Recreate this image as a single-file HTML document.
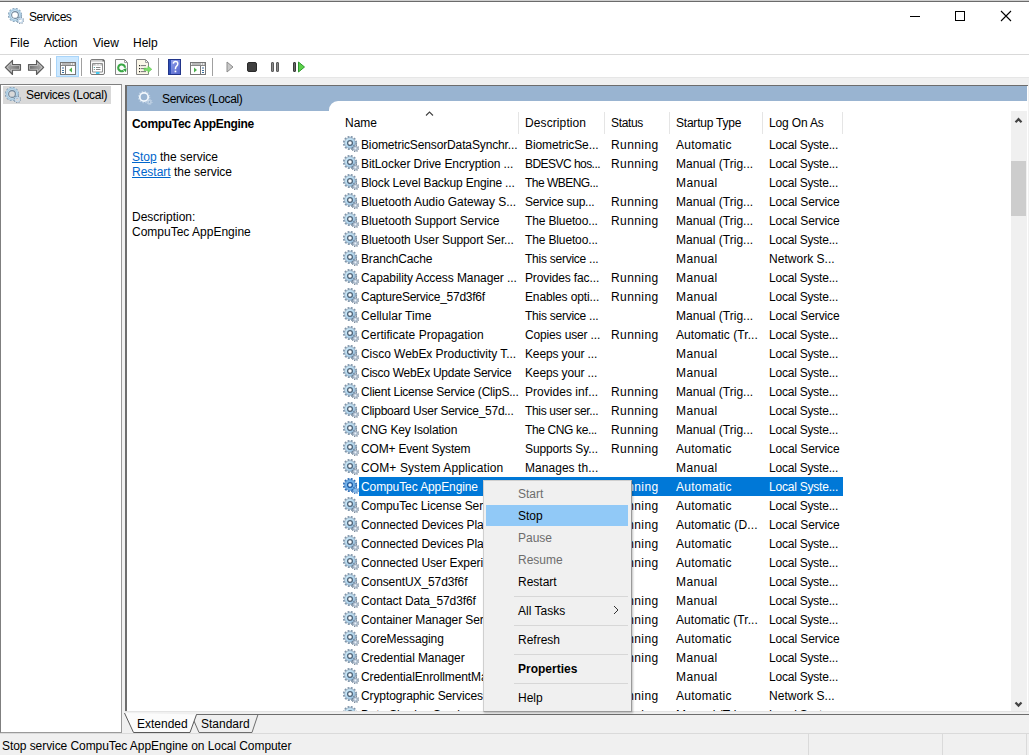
<!DOCTYPE html>
<html><head><meta charset="utf-8">
<style>
*{margin:0;padding:0;box-sizing:border-box}
html,body{width:1029px;height:755px;overflow:hidden;background:#f0f0f0;font-family:"Liberation Sans",sans-serif;font-size:12px;color:#000}
.a{position:absolute;white-space:nowrap}
.t{position:absolute;white-space:nowrap;line-height:14px;height:14px}
</style></head><body>
<svg width="0" height="0" style="position:absolute">
<defs>
<linearGradient id="gr" x1="0" y1="0" x2="1" y2="1">
<stop offset="0" stop-color="#d6f0fb"/><stop offset=".55" stop-color="#b2d6ee"/><stop offset="1" stop-color="#86aed0"/>
</linearGradient>
<symbol id="gear" viewBox="0 0 16 16">
<circle cx="7" cy="7" r="6.2" fill="none" stroke="#7f95aa" stroke-width="1.8" stroke-dasharray="1.9 1.35"/>
<circle cx="7" cy="7" r="5.4" fill="url(#gr)" stroke="#8499ad" stroke-width="0.6"/>
<circle cx="7" cy="7" r="2.4" fill="#fbfdff" stroke="#51667a" stroke-width="1.3"/>
<circle cx="12.4" cy="12.4" r="3" fill="none" stroke="#6d8095" stroke-width="1.5" stroke-dasharray="1.1 1.25"/>
<circle cx="12.4" cy="12.4" r="2.2" fill="#bccbdc" stroke="#7a8ca0" stroke-width="0.5"/>
<circle cx="12.4" cy="12.4" r="0.8" fill="#eef3f8"/>
</symbol>
<symbol id="gearL" viewBox="0 0 16 16">
<circle cx="7" cy="7" r="6.2" fill="none" stroke="#8197ac" stroke-width="1.8" stroke-dasharray="1.9 1.35"/>
<circle cx="7" cy="7" r="5.3" fill="none" stroke="#b9dcf2" stroke-width="2.2"/>
<circle cx="7" cy="7" r="5.4" fill="none" stroke="#93a9bd" stroke-width="0.5"/>
<circle cx="7" cy="7" r="3.4" fill="none" stroke="#6f879d" stroke-width="1.1"/>
<circle cx="12.4" cy="12.4" r="3" fill="none" stroke="#7a8fa4" stroke-width="1.5" stroke-dasharray="1.1 1.25"/>
<circle cx="12.4" cy="12.4" r="2.1" fill="none" stroke="#c4d8ea" stroke-width="1.2"/>
</symbol>
<symbol id="gearS" viewBox="0 0 16 16">
<circle cx="7" cy="7" r="6.2" fill="none" stroke="#2f6db5" stroke-width="1.8" stroke-dasharray="1.9 1.35"/>
<circle cx="7" cy="7" r="5.4" fill="#6eb0ea" stroke="#3a78c0" stroke-width="0.6"/>
<circle cx="7" cy="7" r="2.4" fill="#e6f3ff" stroke="#1f5aa0" stroke-width="1.3"/>
<circle cx="12.4" cy="12.4" r="3" fill="none" stroke="#2f6db5" stroke-width="1.5" stroke-dasharray="1.1 1.25"/>
<circle cx="12.4" cy="12.4" r="2.2" fill="#86bdec" stroke="#3a78c0" stroke-width="0.5"/>
</symbol>
<symbol id="gearW" viewBox="0 0 16 16">
<circle cx="6" cy="7" r="5.6" fill="none" stroke="#bfd1e4" stroke-width="1.4" stroke-dasharray="1.4 1.53"/>
<circle cx="6" cy="7" r="4.2" fill="none" stroke="#f2f7fc" stroke-width="1.8"/>
<circle cx="11.5" cy="12" r="2.6" fill="none" stroke="#cddbea" stroke-width="1" stroke-dasharray="0.9 1.1"/>
<circle cx="11.5" cy="12" r="1.6" fill="none" stroke="#dfe9f4" stroke-width="0.7"/>
</symbol>
</defs></svg>

<div class="a" style="left:0;top:0;width:1029px;height:1px;background:#cfcfcf"></div>
<div class="a" style="left:0;top:1px;width:1029px;height:1px;background:#6b6b6b"></div>
<div class="a" style="left:0;top:2px;width:1029px;height:52px;background:#fff"></div>
<div class="a" style="left:8px;top:8px;width:16px;height:16px"><svg width="16" height="16"><use href="#gearL"/></svg></div>
<div class="t" style="left:29px;top:10px;letter-spacing:-0.45px">Services</div>
<div class="a" style="left:910px;top:16px;width:10px;height:1px;background:#000"></div>
<div class="a" style="left:955px;top:11px;width:10px;height:10px;border:1px solid #000"></div>
<svg class="a" style="left:1000px;top:10px" width="12" height="12"><path d="M1 1L11 11M11 1L1 11" stroke="#000" stroke-width="1.1"/></svg>

<div class="t" style="left:10px;top:36px">File</div>
<div class="t" style="left:44px;top:36px">Action</div>
<div class="t" style="left:93px;top:36px">View</div>
<div class="t" style="left:133px;top:36px">Help</div>
<div class="a" style="left:0;top:54px;width:1029px;height:1px;background:#d9d9d9"></div>
<div class="a" style="left:0;top:55px;width:1029px;height:22px;background:#fff"></div>
<div class="a" style="left:0;top:77px;width:1029px;height:1px;background:#e6e6e6"></div>
<!-- back/forward -->
<svg class="a" style="left:4px;top:59px" width="18" height="17" viewBox="0 0 18 17">
<defs><linearGradient id="ag" x1="0" y1="0" x2="1" y2="0.3"><stop offset="0" stop-color="#bdbdbd"/><stop offset="1" stop-color="#6f6f6f"/></linearGradient>
<linearGradient id="ag2" x1="1" y1="0" x2="0" y2="0.3"><stop offset="0" stop-color="#bdbdbd"/><stop offset="1" stop-color="#6f6f6f"/></linearGradient></defs>
<path d="M1.3 8.3L8.5 1.3V5.5H16.5V11.3H8.5V15.5Z" fill="url(#ag)" stroke="#5c5c5c" stroke-width="1.1" stroke-linejoin="round"/>
<path d="M3 8.3L7.5 4V6.5H15.5V10.3H7.5V12.7Z" fill="none" stroke="#d6d6d6" stroke-width="0.6"/>
</svg>
<svg class="a" style="left:27px;top:59px" width="18" height="17" viewBox="0 0 18 17">
<path d="M16.7 8.3L9.5 1.3V5.5H1.5V11.3H9.5V15.5Z" fill="url(#ag2)" stroke="#5c5c5c" stroke-width="1.1" stroke-linejoin="round"/>
<path d="M15 8.3L10.5 4V6.5H2.5V10.3H10.5V12.7Z" fill="none" stroke="#d6d6d6" stroke-width="0.6"/>
</svg>
<div class="a" style="left:50px;top:58px;width:1px;height:18px;background:#a0a0a0"></div>
<div class="a" style="left:56px;top:56px;width:23px;height:21px;background:#cce8ff;border:1px solid #a9d5fa"></div>
<svg class="a" style="left:60px;top:62px" width="16" height="13" viewBox="0 0 16 13">
<rect x="0.5" y="0.5" width="15" height="12" fill="#fff" stroke="#777"/>
<rect x="1" y="1" width="14" height="3" fill="#e8e8e8"/>
<rect x="2" y="1.5" width="9" height="1" fill="#888"/>
<rect x="12" y="1.5" width="1" height="1" fill="#888"/><rect x="14" y="1.5" width="1" height="1" fill="#888"/>
<rect x="1" y="3" width="14" height="1" fill="#888"/>
<line x1="5.5" y1="4" x2="5.5" y2="12" stroke="#777"/>
<rect x="2" y="5.5" width="2" height="1" fill="#3f6f9f"/><rect x="2" y="8" width="2" height="1" fill="#3f6f9f"/><rect x="2" y="10" width="2" height="1" fill="#3f6f9f"/>
<path d="M12 5.5V10.5L9 8Z" fill="#4cb04c"/>
</svg>
<div class="a" style="left:81px;top:58px;width:1px;height:18px;background:#a0a0a0"></div>
<svg class="a" style="left:90px;top:59px" width="15" height="16" viewBox="0 0 15 16">
<rect x="0.5" y="0.5" width="14" height="15" rx="1.5" fill="#fafafa" stroke="#7a7a7a"/>
<rect x="1" y="1.3" width="12" height="1.2" fill="#b8b8b8"/>
<rect x="12.5" y="1" width="1.5" height="1.5" fill="#666"/>
<path d="M2.5 4.5H12.5V13H2.5Z" fill="#fff" stroke="#909090"/>
<rect x="3" y="5" width="9" height="1.6" fill="#bdbdbd"/>
<rect x="5.5" y="5.2" width="2" height="1.2" fill="#fff"/><rect x="8.5" y="5.2" width="2" height="1.2" fill="#fff"/>
<rect x="3.8" y="8" width="1" height="1" fill="#2a8f8f"/><rect x="6" y="8" width="4.5" height="1" fill="#8a8a8a"/>
<rect x="3.8" y="10" width="1" height="1" fill="#777"/><rect x="6" y="10" width="4.5" height="1" fill="#8a8a8a"/>
<rect x="6" y="13" width="3.5" height="2" fill="#44c8ee"/>
</svg>
<svg class="a" style="left:115px;top:59px" width="14" height="16" viewBox="0 0 14 16">
<path d="M0.5 0.5H9.5L12.5 3.5V15.5H0.5Z" fill="#fcfcfc" stroke="#858585"/>
<path d="M9.5 0.5V3.5H12.5" fill="none" stroke="#a0a0a0"/>
<path d="M8.6 11.6A3.4 3.4 0 1 1 10 8.8" fill="none" stroke="#3aa845" stroke-width="2.1"/>
<path d="M8 10.2L11.6 9.3L11 13.3Z" fill="#2e9e3c"/>
</svg>
<svg class="a" style="left:136px;top:59px" width="17" height="16" viewBox="0 0 17 16">
<path d="M0.5 0.5H9.5L12.5 3.5V15.5H0.5Z" fill="#fbf7e8" stroke="#858585"/>
<path d="M9.5 0.5V3.5H12.5" fill="none" stroke="#a0a0a0"/>
<rect x="3" y="6" width="1.2" height="1.2" fill="#222"/><rect x="5" y="6.1" width="5" height="1" fill="#777"/>
<rect x="3" y="9" width="1.2" height="1.2" fill="#222"/><rect x="5" y="9.1" width="5" height="1" fill="#777"/>
<rect x="3" y="12" width="1.2" height="1.2" fill="#222"/><rect x="5" y="12.1" width="5" height="1" fill="#777"/>
<path d="M8 9.2H12V7L15.8 10.3L12 13.6V11.4H8Z" fill="#7ee06a" stroke="#4dbb40" stroke-width="0.5"/>
</svg>
<div class="a" style="left:158px;top:58px;width:1px;height:18px;background:#a0a0a0"></div>
<svg class="a" style="left:168px;top:59px" width="13" height="16" viewBox="0 0 13 16">
<defs><linearGradient id="hg" x1="0" y1="0" x2="1" y2="1"><stop offset="0" stop-color="#9aa8f0"/><stop offset="1" stop-color="#4d5fc8"/></linearGradient></defs>
<rect x="0" y="0" width="13" height="16" fill="url(#hg)"/>
<rect x="0" y="0" width="3" height="16" fill="#2d4fb8"/>
<rect x="0.5" y="0.5" width="12" height="15" fill="none" stroke="#22358a" stroke-width="1"/>
<path d="M5.3 4.6Q5.6 2.6 7.6 2.6Q9.8 2.6 9.8 4.8Q9.8 6.3 8.4 7.3Q7.4 8 7.4 10.3" fill="none" stroke="#fff" stroke-width="1.5"/>
<rect x="6.6" y="11.6" width="1.7" height="1.7" fill="#fff"/>
</svg>
<svg class="a" style="left:190px;top:62px" width="16" height="13" viewBox="0 0 16 13">
<rect x="0.5" y="0.5" width="15" height="12" fill="#fff" stroke="#777"/>
<rect x="1" y="1" width="14" height="3" fill="#e8e8e8"/>
<rect x="2" y="1.5" width="9" height="1" fill="#888"/>
<rect x="12" y="1.5" width="1" height="1" fill="#888"/><rect x="14" y="1.5" width="1" height="1" fill="#888"/>
<rect x="1" y="3" width="14" height="1" fill="#888"/>
<line x1="10.5" y1="4" x2="10.5" y2="12" stroke="#777"/>
<rect x="12" y="5.5" width="2" height="1" fill="#3f6f9f"/><rect x="12" y="8" width="2" height="1" fill="#3f6f9f"/><rect x="12" y="10" width="2" height="1" fill="#3f6f9f"/>
<path d="M4 5.5V10.5L7 8Z" fill="#4cb04c"/>
</svg>
<div class="a" style="left:212px;top:58px;width:1px;height:18px;background:#a0a0a0"></div>
<svg class="a" style="left:226px;top:61px" width="8" height="12" viewBox="0 0 8 12">
<path d="M1 1L7 6L1 11Z" fill="#c8c8c8" stroke="#8c8c8c" stroke-width="1" stroke-linejoin="round"/>
</svg>
<div class="a" style="left:247px;top:62px;width:10px;height:10px;background:#3f3f3f;border:1px solid #2a2a2a;border-radius:2px"></div>
<div class="a" style="left:271px;top:62px;width:3px;height:10px;background:#8a8a8a;border:1px solid #5a5a5a;border-radius:1px"></div>
<div class="a" style="left:276px;top:62px;width:3px;height:10px;background:#8a8a8a;border:1px solid #5a5a5a;border-radius:1px"></div>
<div class="a" style="left:293px;top:62px;width:3px;height:10px;background:#666;border:1px solid #3a3a3a;border-radius:1px"></div>
<svg class="a" style="left:298px;top:61px" width="8" height="12" viewBox="0 0 8 12">
<path d="M0.5 1L6.5 6L0.5 11Z" fill="#5cd24a" stroke="#2f9a2f" stroke-width="1" stroke-linejoin="round"/>
</svg>


<div class="a" style="left:0;top:84px;width:122px;height:649px;background:#fff;border:1px solid #7f7f7f;border-right-color:#9a9a9a;border-bottom-color:#9a9a9a"></div>
<div class="a" style="left:3px;top:86px;width:108px;height:18px;background:#d9d9d9"></div>
<div class="a" style="left:5px;top:87px;width:16px;height:16px"><svg width="16" height="16"><use href="#gearL"/></svg></div>
<div class="t" style="left:26px;top:88px;letter-spacing:-0.3px">Services (Local)</div>
<div class="a" style="left:125px;top:85px;width:903px;height:627px;background:#fff;border-left:2px solid #6d6d6d;border-top:1px solid #6d6d6d"></div>
<div class="a" style="left:127px;top:86px;width:900px;height:25px;background:#99b4d1"></div>
<div class="a" style="left:329px;top:101px;width:698px;height:12px;background:#fff;border-top-left-radius:9px"></div>
<div class="a" style="left:138px;top:90px;width:16px;height:16px"><svg width="16" height="16"><use href="#gearW"/></svg></div>
<div class="t" style="left:162px;top:92px;letter-spacing:-0.35px">Services (Local)</div>
<div class="t" style="left:132px;top:117px;font-weight:bold;letter-spacing:-0.3px">CompuTec AppEngine</div>
<div class="t" style="left:132px;top:150px"><span style="color:#0066cc;text-decoration:underline">Stop</span> the service</div>
<div class="t" style="left:132px;top:165px"><span style="color:#0066cc;text-decoration:underline">Restart</span> the service</div>
<div class="t" style="left:132px;top:210px">Description:</div>
<div class="t" style="left:132px;top:225px">CompuTec AppEngine</div>

<div class="t" style="left:345px;top:116px">Name</div>
<svg class="a" style="left:425px;top:110px" width="10" height="7"><path d="M1 5.5L4.5 2L8 5.5" fill="none" stroke="#404040" stroke-width="1.1"/></svg>
<div class="a" style="left:518px;top:112px;width:1px;height:22px;background:#e5e5e5"></div>
<div class="a" style="left:604px;top:112px;width:1px;height:22px;background:#e5e5e5"></div>
<div class="a" style="left:669px;top:112px;width:1px;height:22px;background:#e5e5e5"></div>
<div class="a" style="left:762px;top:112px;width:1px;height:22px;background:#e5e5e5"></div>
<div class="a" style="left:842px;top:112px;width:1px;height:22px;background:#e5e5e5"></div>
<div class="t" style="left:525px;top:116px;letter-spacing:0.1px">Description</div>
<div class="t" style="left:611px;top:116px;letter-spacing:-0.35px">Status</div>
<div class="t" style="left:676px;top:116px;letter-spacing:-0.22px">Startup Type</div>
<div class="t" style="left:769px;top:116px;letter-spacing:-0.15px">Log On As</div>
<div class="a" style="left:329px;top:135px;width:682px;height:577px;overflow:hidden">
<div class="a" style="left:14px;top:1px;width:16px;height:16px"><svg width="16" height="16"><use href="#gear"/></svg></div>
<div class="t" style="left:32px;top:3px;letter-spacing:-0.13px;">BiometricSensorDataSynchr...</div>
<div class="t" style="left:196px;top:3px;letter-spacing:-0.092px;">BiometricSe...</div>
<div class="t" style="left:282px;top:3px;letter-spacing:0.417px;">Running</div>
<div class="t" style="left:347px;top:3px;letter-spacing:0.275px;">Automatic</div>
<div class="t" style="left:440px;top:3px;letter-spacing:-0.215px;">Local Syste...</div>
<div class="a" style="left:14px;top:20px;width:16px;height:16px"><svg width="16" height="16"><use href="#gear"/></svg></div>
<div class="t" style="left:32px;top:22px;letter-spacing:-0.079px;">BitLocker Drive Encryption ...</div>
<div class="t" style="left:196px;top:22px;letter-spacing:-0.542px;">BDESVC hos...</div>
<div class="t" style="left:282px;top:22px;letter-spacing:0.417px;">Running</div>
<div class="t" style="left:347px;top:22px;letter-spacing:0.014px;">Manual (Trig...</div>
<div class="t" style="left:440px;top:22px;letter-spacing:-0.215px;">Local Syste...</div>
<div class="a" style="left:14px;top:39px;width:16px;height:16px"><svg width="16" height="16"><use href="#gear"/></svg></div>
<div class="t" style="left:32px;top:41px;letter-spacing:-0.179px;">Block Level Backup Engine ...</div>
<div class="t" style="left:196px;top:41px;letter-spacing:-0.527px;">The WBENG...</div>
<div class="t" style="left:347px;top:41px;letter-spacing:0.38px;">Manual</div>
<div class="t" style="left:440px;top:41px;letter-spacing:-0.215px;">Local Syste...</div>
<div class="a" style="left:14px;top:58px;width:16px;height:16px"><svg width="16" height="16"><use href="#gear"/></svg></div>
<div class="t" style="left:32px;top:60px;letter-spacing:-0.037px;">Bluetooth Audio Gateway S...</div>
<div class="t" style="left:196px;top:60px;letter-spacing:-0.238px;">Service sup...</div>
<div class="t" style="left:282px;top:60px;letter-spacing:0.417px;">Running</div>
<div class="t" style="left:347px;top:60px;letter-spacing:0.014px;">Manual (Trig...</div>
<div class="t" style="left:440px;top:60px;letter-spacing:-0.117px;">Local Service</div>
<div class="a" style="left:14px;top:77px;width:16px;height:16px"><svg width="16" height="16"><use href="#gear"/></svg></div>
<div class="t" style="left:32px;top:79px;letter-spacing:-0.042px;">Bluetooth Support Service</div>
<div class="t" style="left:196px;top:79px;letter-spacing:-0.138px;">The Bluetoo...</div>
<div class="t" style="left:282px;top:79px;letter-spacing:0.417px;">Running</div>
<div class="t" style="left:347px;top:79px;letter-spacing:0.014px;">Manual (Trig...</div>
<div class="t" style="left:440px;top:79px;letter-spacing:-0.117px;">Local Service</div>
<div class="a" style="left:14px;top:96px;width:16px;height:16px"><svg width="16" height="16"><use href="#gear"/></svg></div>
<div class="t" style="left:32px;top:98px;letter-spacing:-0.114px;">Bluetooth User Support Ser...</div>
<div class="t" style="left:196px;top:98px;letter-spacing:-0.138px;">The Bluetoo...</div>
<div class="t" style="left:347px;top:98px;letter-spacing:0.014px;">Manual (Trig...</div>
<div class="t" style="left:440px;top:98px;letter-spacing:-0.215px;">Local Syste...</div>
<div class="a" style="left:14px;top:115px;width:16px;height:16px"><svg width="16" height="16"><use href="#gear"/></svg></div>
<div class="t" style="left:32px;top:117px;letter-spacing:-0.13px;">BranchCache</div>
<div class="t" style="left:196px;top:117px;letter-spacing:-0.253px;">This service ...</div>
<div class="t" style="left:347px;top:117px;letter-spacing:0.38px;">Manual</div>
<div class="t" style="left:440px;top:117px;letter-spacing:0.027px;">Network S...</div>
<div class="a" style="left:14px;top:134px;width:16px;height:16px"><svg width="16" height="16"><use href="#gear"/></svg></div>
<div class="t" style="left:32px;top:136px;letter-spacing:-0.079px;">Capability Access Manager ...</div>
<div class="t" style="left:196px;top:136px;letter-spacing:-0.129px;">Provides fac...</div>
<div class="t" style="left:282px;top:136px;letter-spacing:0.417px;">Running</div>
<div class="t" style="left:347px;top:136px;letter-spacing:0.38px;">Manual</div>
<div class="t" style="left:440px;top:136px;letter-spacing:-0.215px;">Local Syste...</div>
<div class="a" style="left:14px;top:153px;width:16px;height:16px"><svg width="16" height="16"><use href="#gear"/></svg></div>
<div class="t" style="left:32px;top:155px;letter-spacing:-0.252px;">CaptureService_57d3f6f</div>
<div class="t" style="left:196px;top:155px;letter-spacing:-0.129px;">Enables opti...</div>
<div class="t" style="left:282px;top:155px;letter-spacing:0.417px;">Running</div>
<div class="t" style="left:347px;top:155px;letter-spacing:0.38px;">Manual</div>
<div class="t" style="left:440px;top:155px;letter-spacing:-0.215px;">Local Syste...</div>
<div class="a" style="left:14px;top:172px;width:16px;height:16px"><svg width="16" height="16"><use href="#gear"/></svg></div>
<div class="t" style="left:32px;top:174px;letter-spacing:0.033px;">Cellular Time</div>
<div class="t" style="left:196px;top:174px;letter-spacing:-0.253px;">This service ...</div>
<div class="t" style="left:347px;top:174px;letter-spacing:0.014px;">Manual (Trig...</div>
<div class="t" style="left:440px;top:174px;letter-spacing:-0.117px;">Local Service</div>
<div class="a" style="left:14px;top:191px;width:16px;height:16px"><svg width="16" height="16"><use href="#gear"/></svg></div>
<div class="t" style="left:32px;top:193px;letter-spacing:0.027px;">Certificate Propagation</div>
<div class="t" style="left:196px;top:193px;letter-spacing:-0.15px;">Copies user ...</div>
<div class="t" style="left:282px;top:193px;letter-spacing:0.417px;">Running</div>
<div class="t" style="left:347px;top:193px;letter-spacing:0.06px;">Automatic (Tr...</div>
<div class="t" style="left:440px;top:193px;letter-spacing:-0.215px;">Local Syste...</div>
<div class="a" style="left:14px;top:210px;width:16px;height:16px"><svg width="16" height="16"><use href="#gear"/></svg></div>
<div class="t" style="left:32px;top:212px;letter-spacing:-0.043px;">Cisco WebEx Productivity T...</div>
<div class="t" style="left:196px;top:212px;letter-spacing:-0.131px;">Keeps your ...</div>
<div class="t" style="left:347px;top:212px;letter-spacing:0.38px;">Manual</div>
<div class="t" style="left:440px;top:212px;letter-spacing:-0.215px;">Local Syste...</div>
<div class="a" style="left:14px;top:229px;width:16px;height:16px"><svg width="16" height="16"><use href="#gear"/></svg></div>
<div class="t" style="left:32px;top:231px;letter-spacing:-0.264px;">Cisco WebEx Update Service</div>
<div class="t" style="left:196px;top:231px;letter-spacing:-0.131px;">Keeps your ...</div>
<div class="t" style="left:347px;top:231px;letter-spacing:0.38px;">Manual</div>
<div class="t" style="left:440px;top:231px;letter-spacing:-0.215px;">Local Syste...</div>
<div class="a" style="left:14px;top:248px;width:16px;height:16px"><svg width="16" height="16"><use href="#gear"/></svg></div>
<div class="t" style="left:32px;top:250px;letter-spacing:-0.226px;">Client License Service (ClipS...</div>
<div class="t" style="left:196px;top:250px;letter-spacing:0.036px;">Provides inf...</div>
<div class="t" style="left:282px;top:250px;letter-spacing:0.417px;">Running</div>
<div class="t" style="left:347px;top:250px;letter-spacing:0.014px;">Manual (Trig...</div>
<div class="t" style="left:440px;top:250px;letter-spacing:-0.215px;">Local Syste...</div>
<div class="a" style="left:14px;top:267px;width:16px;height:16px"><svg width="16" height="16"><use href="#gear"/></svg></div>
<div class="t" style="left:32px;top:269px;letter-spacing:-0.261px;">Clipboard User Service_57d...</div>
<div class="t" style="left:196px;top:269px;letter-spacing:-0.34px;">This user ser...</div>
<div class="t" style="left:282px;top:269px;letter-spacing:0.417px;">Running</div>
<div class="t" style="left:347px;top:269px;letter-spacing:0.38px;">Manual</div>
<div class="t" style="left:440px;top:269px;letter-spacing:-0.215px;">Local Syste...</div>
<div class="a" style="left:14px;top:286px;width:16px;height:16px"><svg width="16" height="16"><use href="#gear"/></svg></div>
<div class="t" style="left:32px;top:288px;letter-spacing:-0.15px;">CNG Key Isolation</div>
<div class="t" style="left:196px;top:288px;letter-spacing:-0.375px;">The CNG ke...</div>
<div class="t" style="left:282px;top:288px;letter-spacing:0.417px;">Running</div>
<div class="t" style="left:347px;top:288px;letter-spacing:0.014px;">Manual (Trig...</div>
<div class="t" style="left:440px;top:288px;letter-spacing:-0.215px;">Local Syste...</div>
<div class="a" style="left:14px;top:305px;width:16px;height:16px"><svg width="16" height="16"><use href="#gear"/></svg></div>
<div class="t" style="left:32px;top:307px;letter-spacing:-0.175px;">COM+ Event System</div>
<div class="t" style="left:196px;top:307px;letter-spacing:-0.115px;">Supports Sy...</div>
<div class="t" style="left:282px;top:307px;letter-spacing:0.417px;">Running</div>
<div class="t" style="left:347px;top:307px;letter-spacing:0.275px;">Automatic</div>
<div class="t" style="left:440px;top:307px;letter-spacing:-0.117px;">Local Service</div>
<div class="a" style="left:14px;top:324px;width:16px;height:16px"><svg width="16" height="16"><use href="#gear"/></svg></div>
<div class="t" style="left:32px;top:326px;letter-spacing:0.109px;">COM+ System Application</div>
<div class="t" style="left:196px;top:326px;letter-spacing:0.042px;">Manages th...</div>
<div class="t" style="left:347px;top:326px;letter-spacing:0.38px;">Manual</div>
<div class="t" style="left:440px;top:326px;letter-spacing:-0.215px;">Local Syste...</div>
<div class="a" style="left:30px;top:342px;width:484px;height:19px;background:#0078d7"></div>
<div class="a" style="left:14px;top:343px;width:16px;height:16px"><svg width="16" height="16"><use href="#gearS"/></svg></div>
<div class="t" style="left:32px;top:345px;color:#fff;letter-spacing:-0.1px;">CompuTec AppEngine</div>
<div class="t" style="left:196px;top:345px;color:#fff;letter-spacing:-0.1px;">CompuTec...</div>
<div class="t" style="left:282px;top:345px;color:#fff;letter-spacing:0.417px;">Running</div>
<div class="t" style="left:347px;top:345px;color:#fff;letter-spacing:0.275px;">Automatic</div>
<div class="t" style="left:440px;top:345px;color:#fff;letter-spacing:-0.215px;">Local Syste...</div>
<div class="a" style="left:14px;top:362px;width:16px;height:16px"><svg width="16" height="16"><use href="#gear"/></svg></div>
<div class="t" style="left:32px;top:364px;letter-spacing:-0.1px;">CompuTec License Service</div>
<div class="t" style="left:196px;top:364px;letter-spacing:-0.1px;">CompuTec...</div>
<div class="t" style="left:282px;top:364px;letter-spacing:0.417px;">Running</div>
<div class="t" style="left:347px;top:364px;letter-spacing:0.275px;">Automatic</div>
<div class="t" style="left:440px;top:364px;letter-spacing:-0.215px;">Local Syste...</div>
<div class="a" style="left:14px;top:381px;width:16px;height:16px"><svg width="16" height="16"><use href="#gear"/></svg></div>
<div class="t" style="left:32px;top:383px;letter-spacing:-0.1px;">Connected Devices Platfor...</div>
<div class="t" style="left:196px;top:383px;letter-spacing:-0.34px;">This user ser...</div>
<div class="t" style="left:282px;top:383px;letter-spacing:0.417px;">Running</div>
<div class="t" style="left:347px;top:383px;letter-spacing:0.157px;">Automatic (D...</div>
<div class="t" style="left:440px;top:383px;letter-spacing:-0.117px;">Local Service</div>
<div class="a" style="left:14px;top:400px;width:16px;height:16px"><svg width="16" height="16"><use href="#gear"/></svg></div>
<div class="t" style="left:32px;top:402px;letter-spacing:-0.1px;">Connected Devices Platfor...</div>
<div class="t" style="left:196px;top:402px;letter-spacing:-0.253px;">This service ...</div>
<div class="t" style="left:282px;top:402px;letter-spacing:0.417px;">Running</div>
<div class="t" style="left:347px;top:402px;letter-spacing:0.275px;">Automatic</div>
<div class="t" style="left:440px;top:402px;letter-spacing:-0.215px;">Local Syste...</div>
<div class="a" style="left:14px;top:419px;width:16px;height:16px"><svg width="16" height="16"><use href="#gear"/></svg></div>
<div class="t" style="left:32px;top:421px;letter-spacing:-0.1px;">Connected User Experienc...</div>
<div class="t" style="left:196px;top:421px;letter-spacing:-0.1px;">The Connect...</div>
<div class="t" style="left:282px;top:421px;letter-spacing:0.417px;">Running</div>
<div class="t" style="left:347px;top:421px;letter-spacing:0.275px;">Automatic</div>
<div class="t" style="left:440px;top:421px;letter-spacing:-0.215px;">Local Syste...</div>
<div class="a" style="left:14px;top:438px;width:16px;height:16px"><svg width="16" height="16"><use href="#gear"/></svg></div>
<div class="t" style="left:32px;top:440px;letter-spacing:-0.1px;">ConsentUX_57d3f6f</div>
<div class="t" style="left:196px;top:440px;letter-spacing:-0.1px;">Allows Con...</div>
<div class="t" style="left:347px;top:440px;letter-spacing:0.38px;">Manual</div>
<div class="t" style="left:440px;top:440px;letter-spacing:-0.215px;">Local Syste...</div>
<div class="a" style="left:14px;top:457px;width:16px;height:16px"><svg width="16" height="16"><use href="#gear"/></svg></div>
<div class="t" style="left:32px;top:459px;letter-spacing:-0.1px;">Contact Data_57d3f6f</div>
<div class="t" style="left:196px;top:459px;letter-spacing:-0.1px;">Indexes con...</div>
<div class="t" style="left:282px;top:459px;letter-spacing:0.417px;">Running</div>
<div class="t" style="left:347px;top:459px;letter-spacing:0.38px;">Manual</div>
<div class="t" style="left:440px;top:459px;letter-spacing:-0.215px;">Local Syste...</div>
<div class="a" style="left:14px;top:476px;width:16px;height:16px"><svg width="16" height="16"><use href="#gear"/></svg></div>
<div class="t" style="left:32px;top:478px;letter-spacing:-0.1px;">Container Manager Service</div>
<div class="t" style="left:196px;top:478px;letter-spacing:-0.1px;">Provides ad...</div>
<div class="t" style="left:282px;top:478px;letter-spacing:0.417px;">Running</div>
<div class="t" style="left:347px;top:478px;letter-spacing:0.06px;">Automatic (Tr...</div>
<div class="t" style="left:440px;top:478px;letter-spacing:-0.215px;">Local Syste...</div>
<div class="a" style="left:14px;top:495px;width:16px;height:16px"><svg width="16" height="16"><use href="#gear"/></svg></div>
<div class="t" style="left:32px;top:497px;letter-spacing:-0.1px;">CoreMessaging</div>
<div class="t" style="left:196px;top:497px;letter-spacing:-0.1px;">Manages co...</div>
<div class="t" style="left:282px;top:497px;letter-spacing:0.417px;">Running</div>
<div class="t" style="left:347px;top:497px;letter-spacing:0.275px;">Automatic</div>
<div class="t" style="left:440px;top:497px;letter-spacing:-0.117px;">Local Service</div>
<div class="a" style="left:14px;top:514px;width:16px;height:16px"><svg width="16" height="16"><use href="#gear"/></svg></div>
<div class="t" style="left:32px;top:516px;letter-spacing:-0.1px;">Credential Manager</div>
<div class="t" style="left:196px;top:516px;letter-spacing:-0.1px;">Provides se...</div>
<div class="t" style="left:282px;top:516px;letter-spacing:0.417px;">Running</div>
<div class="t" style="left:347px;top:516px;letter-spacing:0.38px;">Manual</div>
<div class="t" style="left:440px;top:516px;letter-spacing:-0.215px;">Local Syste...</div>
<div class="a" style="left:14px;top:533px;width:16px;height:16px"><svg width="16" height="16"><use href="#gear"/></svg></div>
<div class="t" style="left:32px;top:535px;letter-spacing:-0.1px;">CredentialEnrollmentMana...</div>
<div class="t" style="left:196px;top:535px;letter-spacing:-0.1px;">Credential E...</div>
<div class="t" style="left:347px;top:535px;letter-spacing:0.38px;">Manual</div>
<div class="t" style="left:440px;top:535px;letter-spacing:-0.215px;">Local Syste...</div>
<div class="a" style="left:14px;top:552px;width:16px;height:16px"><svg width="16" height="16"><use href="#gear"/></svg></div>
<div class="t" style="left:32px;top:554px;letter-spacing:-0.1px;">Cryptographic Services</div>
<div class="t" style="left:196px;top:554px;letter-spacing:-0.1px;">Provides thr...</div>
<div class="t" style="left:282px;top:554px;letter-spacing:0.417px;">Running</div>
<div class="t" style="left:347px;top:554px;letter-spacing:0.275px;">Automatic</div>
<div class="t" style="left:440px;top:554px;letter-spacing:0.027px;">Network S...</div>
<div class="a" style="left:14px;top:571px;width:16px;height:16px"><svg width="16" height="16"><use href="#gear"/></svg></div>
<div class="t" style="left:32px;top:573px;letter-spacing:-0.1px;">Data Sharing Service</div>
<div class="t" style="left:196px;top:573px;letter-spacing:-0.1px;">Provides da...</div>
<div class="t" style="left:282px;top:573px;letter-spacing:0.417px;">Running</div>
<div class="t" style="left:347px;top:573px;letter-spacing:0.014px;">Manual (Trig...</div>
<div class="t" style="left:440px;top:573px;letter-spacing:-0.215px;">Local Syste...</div>
</div>

<div class="a" style="left:1011px;top:111px;width:16px;height:601px;background:#f0f0f0"></div>
<div class="a" style="left:1011px;top:161px;width:15px;height:55px;background:#cdcdcd"></div>
<svg class="a" style="left:1014px;top:116px" width="10" height="8"><path d="M1.5 6.3L4.5 3.2L7.5 6.3" fill="none" stroke="#444" stroke-width="2.2"/></svg>
<svg class="a" style="left:1014px;top:701px" width="10" height="8"><path d="M1.5 1.5L4.5 4.6L7.5 1.5" fill="none" stroke="#444" stroke-width="2.2"/></svg>


<div class="a" style="left:123px;top:712px;width:906px;height:2px;background:#f0f0f0"></div>
<svg class="a" style="left:120px;top:711px" width="909" height="23" viewBox="0 0 909 23">
<rect x="5" y="0" width="904" height="1" fill="#e3e3e3"/>
<path d="M76.5 3.5H138L132 21.5H79L74 10" fill="#efefef" stroke="#6d6d6d" stroke-width="1"/>
<path d="M4.5 2L13.5 21.5H70L76.5 3.5" fill="#fbfbfb" stroke="#5a5a5a" stroke-width="1"/>
<line x1="76.5" y1="3.5" x2="909" y2="3.5" stroke="#6d6d6d"/>
</svg>
<div class="t" style="left:137px;top:717px">Extended</div>
<div class="t" style="left:201px;top:717px">Standard</div>
<div class="a" style="left:0;top:733px;width:1029px;height:1px;background:#dadada"></div>
<div class="t" style="left:2px;top:739px;letter-spacing:-0.07px">Stop service CompuTec AppEngine on Local Computer</div>
<div class="a" style="left:808px;top:734px;width:1px;height:21px;background:#dadada"></div>
<div class="a" style="left:942px;top:734px;width:1px;height:21px;background:#dadada"></div>
<div class="a" style="left:1026px;top:734px;width:1px;height:21px;background:#dadada"></div>


<div class="a" style="left:483px;top:480px;width:149px;height:232px;background:#f0f0f0;border:1px solid #cfcfcf;border-right-color:#9a9a9a;border-bottom-color:#9a9a9a;box-shadow:1px 1px 2px rgba(0,0,0,.25)"></div>
<div class="a" style="left:486px;top:505px;width:142px;height:21px;background:#91c9f7"></div>

<div class="t" style="left:518px;top:487px;color:#6d6d6d;">Start</div>
<div class="t" style="left:518px;top:509px;color:#000;">Stop</div>
<div class="t" style="left:518px;top:531px;color:#6d6d6d;">Pause</div>
<div class="t" style="left:518px;top:553px;color:#6d6d6d;">Resume</div>
<div class="t" style="left:518px;top:575px;color:#000;">Restart</div>
<div class="t" style="left:518px;top:604px;color:#000;">All Tasks</div>
<div class="t" style="left:518px;top:633px;color:#000;">Refresh</div>
<div class="t" style="left:518px;top:662px;color:#000;font-weight:bold;">Properties</div>
<div class="t" style="left:518px;top:691px;color:#000;">Help</div>
<div class="a" style="left:514px;top:596px;width:114px;height:1px;background:#d7d7d7"></div>
<div class="a" style="left:514px;top:625px;width:114px;height:1px;background:#d7d7d7"></div>
<div class="a" style="left:514px;top:654px;width:114px;height:1px;background:#d7d7d7"></div>
<div class="a" style="left:514px;top:683px;width:114px;height:1px;background:#d7d7d7"></div>
<svg class="a" style="left:613px;top:605px" width="6" height="10"><path d="M1 1L5 5L1 9" fill="none" stroke="#333" stroke-width="1"/></svg>
</body></html>
